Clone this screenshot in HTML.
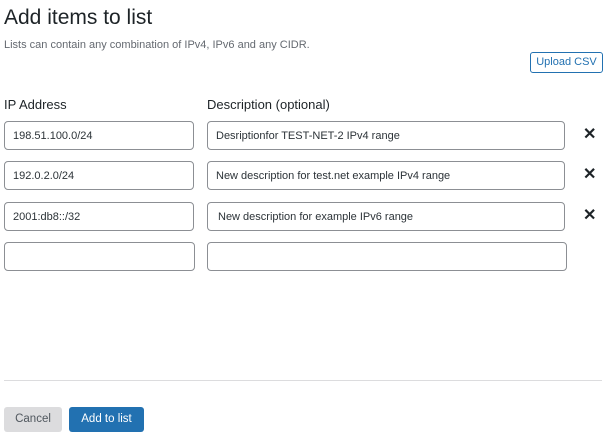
<!DOCTYPE html>
<html><head><style>
body{margin:0;width:608px;height:443px;background:#fff;font-family:"Liberation Sans",sans-serif;color:#1d2327;position:relative;overflow:hidden}
.a{position:absolute}
h1{position:absolute;margin:0;left:4px;top:6px;font-size:21px;font-weight:normal;color:#1d2327}
.sub{left:4px;top:39px;font-size:11px;color:#646970}
.up{left:530px;top:52px;width:71px;height:19px;border:1px solid #2271b1;border-radius:3px;color:#2271b1;font-size:11px;line-height:19px;text-align:center}
.lbl{top:97px;font-size:13px;color:#1d2327}
.in{border:1px solid #8c8f94;border-radius:4px;box-sizing:border-box;font-size:11px;line-height:28px;padding-left:8px;color:#2c3338}
.x{left:583px;font-size:16px;font-weight:bold}
.hr{left:4px;top:380px;width:598px;height:1px;background:#dcdcde}
.btn{top:407px;height:25px;border-radius:3px;font-size:11.5px;line-height:25px;text-align:center}
</style></head><body>
<h1>Add items to list</h1>
<div class="a sub">Lists can contain any combination of IPv4, IPv6 and any CIDR.</div>
<div class="a up">Upload CSV</div>
<div class="a lbl" style="left:4px">IP Address</div>
<div class="a lbl" style="left:207px">Description (optional)</div>

<div class="a in" style="left:4px;top:121px;width:190px;height:29px">198.51.100.0/24</div>
<div class="a in" style="left:207px;top:121px;width:358px;height:29px">Desriptionfor TEST-NET-2 IPv4 range</div>
<div class="a x" style="top:124px">✕</div>

<div class="a in" style="left:4px;top:161px;width:190px;height:29px">192.0.2.0/24</div>
<div class="a in" style="left:207px;top:161px;width:358px;height:29px">New description for test.net example IPv4 range</div>
<div class="a x" style="top:164px">✕</div>

<div class="a in" style="left:4px;top:202px;width:190px;height:29px">2001:db8::/32</div>
<div class="a in" style="left:207px;top:202px;width:358px;height:29px;padding-left:10px">New description for example IPv6 range</div>
<div class="a x" style="top:205px">✕</div>

<div class="a in" style="left:4px;top:242px;width:191px;height:29px"></div>
<div class="a in" style="left:207px;top:242px;width:360px;height:29px"></div>

<div class="a hr"></div>
<div class="a btn" style="left:4px;width:58px;background:#dcdcde;color:#50575e">Cancel</div>
<div class="a btn" style="left:69px;width:75px;background:#2271b1;color:#fff">Add to list</div>
</body></html>
